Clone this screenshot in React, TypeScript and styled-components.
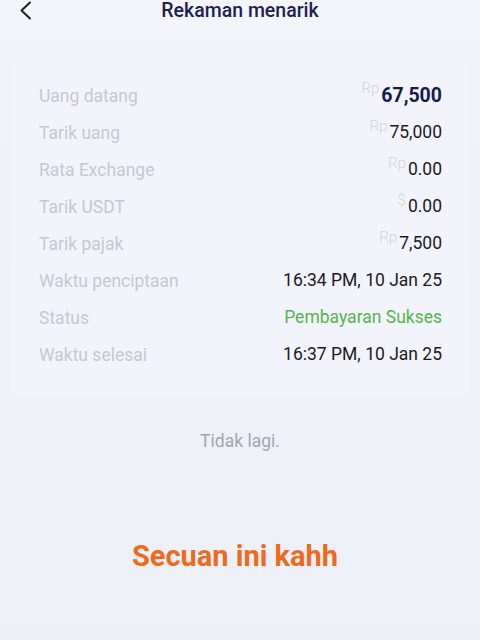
import styled, { createGlobalStyle } from 'styled-components';

const GlobalStyle = createGlobalStyle`
  html, body {
    margin: 0;
    padding: 0;
    background: #eef0f8;
    font-family: Roboto, "Noto Sans", sans-serif;
  }
`;

const Page = styled.div`
  width: 480px;
  height: 640px;
  display: flex;
  flex-direction: column;
  background: linear-gradient(180deg, #f1f3fa 0%, #eef0f8 100%);
  overflow: hidden;
`;

const Header = styled.header`
  height: 40px;
  display: flex;
  align-items: flex-start;
  justify-content: center;
  position: relative;
  background: #f4f5fb;
`;

const BackButton = styled.button`
  position: absolute;
  left: 17px;
  top: 0;
  border: none;
  background: none;
  padding: 0;
  display: flex;
`;

const Title = styled.h1`
  margin: 0;
  font-size: 19.5px;
  font-weight: 500;
  color: #1d2150;
  line-height: 22px;
`;

const Card = styled.section`
  margin: 12px 10px 0;
  padding: 25px 28px 24px 29px;
  background: #f3f4fb;
  border-radius: 12px;
  display: flex;
  flex-direction: column;
`;

const Row = styled.div`
  height: 37px;
  display: flex;
  align-items: center;
  justify-content: space-between;
`;

const Label = styled.span`
  font-size: 17.5px;
  color: #c6c8d0;
`;

const Value = styled.span<{ $tone?: 'strong' | 'success' }>`
  display: flex;
  align-items: flex-start;
  line-height: 1.2;
  font-size: ${({ $tone }) => ($tone === 'strong' ? '19.5px' : '17.5px')};
  font-weight: ${({ $tone }) => ($tone === 'strong' ? 700 : 400)};
  color: ${({ $tone }) =>
    $tone === 'strong' ? '#141a4e' : $tone === 'success' ? '#55b64b' : '#1b1b1f'};
`;

const Unit = styled.span`
  font-size: 15px;
  font-weight: 300;
  color: #d2d4da;
  margin-right: 2px;
  line-height: 1;
  position: relative;
  top: -3px;
`;

const EndNote = styled.p`
  margin: 34px 0 0;
  text-align: center;
  font-size: 17.5px;
  color: #a3a6ae;
`;

const Caption = styled.p`
  margin: 88px 0 0;
  padding-right: 10px;
  text-align: center;
  font-size: 29px;
  font-weight: 700;
  color: #ee6a1d;
`;

type Item = {
  label: string;
  value: string;
  unit?: string;
  tone?: 'strong' | 'success';
};

const items: Item[] = [
  { label: 'Uang datang', value: '67,500', unit: 'Rp', tone: 'strong' },
  { label: 'Tarik uang', value: '75,000', unit: 'Rp' },
  { label: 'Rata Exchange', value: '0.00', unit: 'Rp' },
  { label: 'Tarik USDT', value: '0.00', unit: '$' },
  { label: 'Tarik pajak', value: '7,500', unit: 'Rp' },
  { label: 'Waktu penciptaan', value: '16:34 PM, 10 Jan 25' },
  { label: 'Status', value: 'Pembayaran Sukses', tone: 'success' },
  { label: 'Waktu selesai', value: '16:37 PM, 10 Jan 25' },
];

export default function App() {
  return (
    <Page>
      <GlobalStyle />
      <Header>
        <BackButton aria-label="Kembali">
          <svg width="18" height="22" viewBox="0 0 18 22" fill="none">
            <path d="M13 2.5 L4.5 10.5 L13 18.5" stroke="#222" strokeWidth="2" strokeLinecap="round" strokeLinejoin="round" />
          </svg>
        </BackButton>
        <Title>Rekaman menarik</Title>
      </Header>
      <Card>
        {items.map((item) => (
          <Row key={item.label}>
            <Label>{item.label}</Label>
            <Value $tone={item.tone}>
              {item.unit && <Unit>{item.unit}</Unit>}
              {item.value}
            </Value>
          </Row>
        ))}
      </Card>
      <EndNote>Tidak lagi.</EndNote>
      <Caption>Secuan ini kahh</Caption>
    </Page>
  );
}
